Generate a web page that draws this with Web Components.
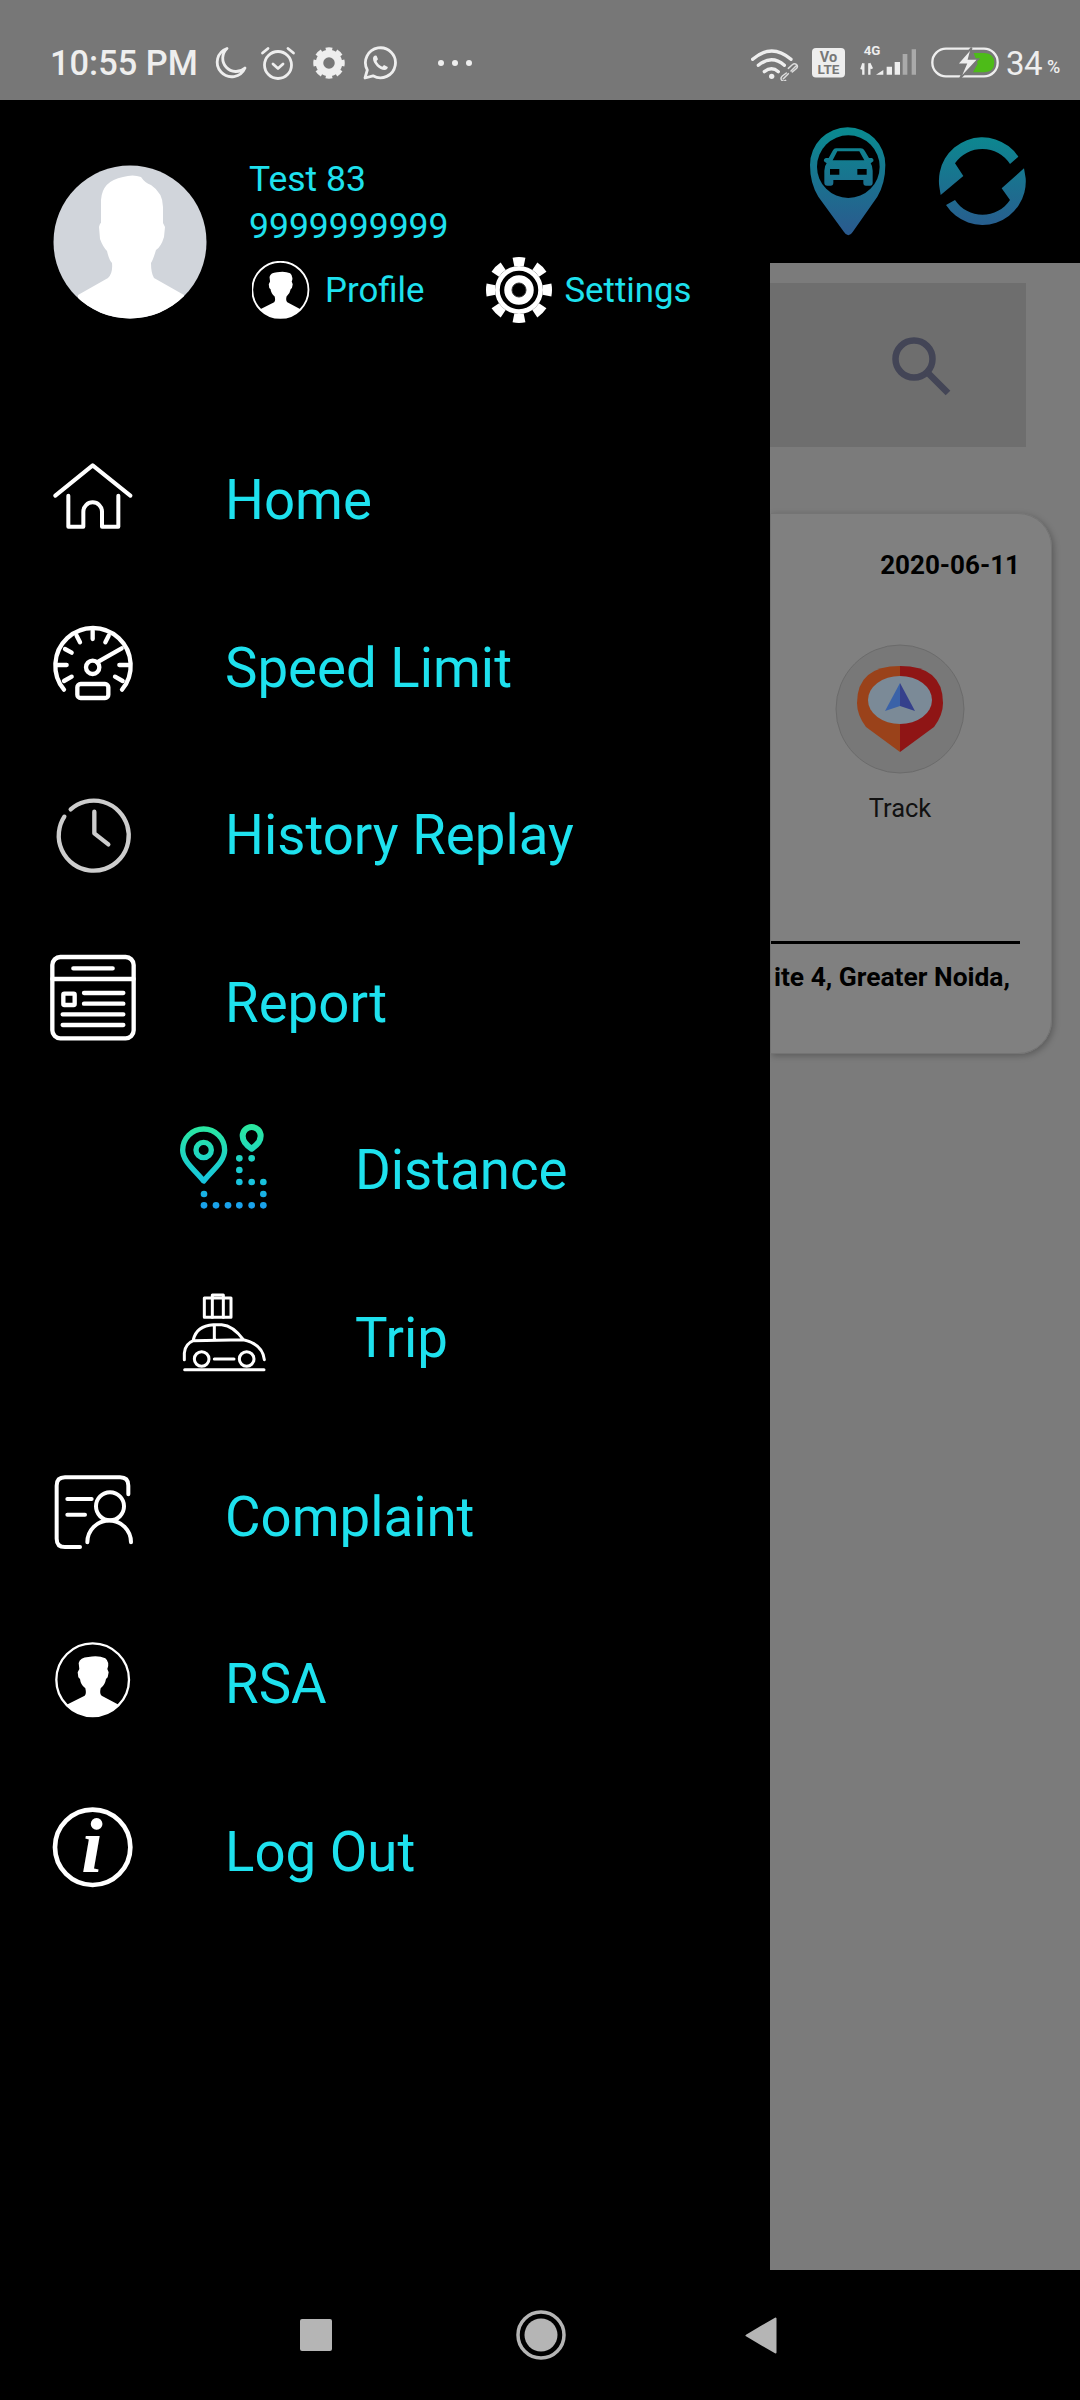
<!DOCTYPE html>
<html lang="en"><head><meta charset="utf-8"><title>Drawer</title>
<style>html,body{margin:0;padding:0;background:#000;font-family:Roboto,"Liberation Sans",sans-serif}</style>
</head><body>
<phone-screen>
  <status-bar></status-bar>
  <screen-body>
    <top-bar></top-bar>
    <search-box></search-box>
    <device-card date="2020-06-11" address="ite 4, Greater Noida,"></device-card>
    <nav-drawer>
      <profile-head name="Test 83" phone="9999999999"></profile-head>
      <drawer-item><svg slot="icon" width="120" height="120" viewBox="0 0 360 360" fill="none" stroke="#fff" stroke-width="12" stroke-linecap="round" stroke-linejoin="round"><path d="M76 167 188 76 301 167M115 167V260H160V215A28 28 0 0 1 216 215V260H265V167"/></svg>Home</drawer-item>
      <drawer-item><svg slot="icon" width="120" height="120" viewBox="0 504 360 360" fill="none" stroke="#fff" stroke-width="13" stroke-linecap="round" stroke-linejoin="round"><path d="M102 752A113 113 0 1 1 276 752"/><path d="M188 575V600M140 590 150 610M236 590 226 610M105 630 125 641M78 678H110M268 678H298M102 726 125 713M255 713 278 726M205 668 275 628"/><circle cx="188" cy="685" r="20"/><rect x="142" y="735" width="93" height="42" rx="10"/></svg>Speed Limit</drawer-item>
      <drawer-item><svg slot="icon" width="120" height="120" viewBox="0 15 360 360" fill="none" stroke="#cdcdcd" stroke-width="13" stroke-linecap="round" stroke-linejoin="round"><path d="M122 118A105 105 0 1 1 103 140"/><path d="M193 125V190L235 223"/></svg>History Replay</drawer-item>
      <drawer-item><svg slot="icon" width="120" height="120" viewBox="0 519 360 360" fill="none" stroke="#fff" stroke-width="13" stroke-linecap="round" stroke-linejoin="round"><rect x="67" y="564" width="244" height="244" rx="24"/><path d="M67 630H311M130 598H248M162 672H280M162 704H280M98 736H280M98 768H280"/><rect x="100" y="674" width="34" height="34" rx="3"/></svg>Report</drawer-item>
      <drawer-item sub><svg slot="icon" width="130" height="140" viewBox="0 0 390 420" fill="none"><defs><linearGradient id="dg" gradientUnits="userSpaceOnUse" x1="0" y1="70" x2="0" y2="330"><stop offset="0" stop-color="#2be99c"/><stop offset=".65" stop-color="#17c6dc"/><stop offset="1" stop-color="#1a9bee"/></linearGradient></defs><g stroke="url(#dg)"><path stroke-width="16" stroke-linejoin="round" d="M131 243C105 210 68 185 68 150A63 63 0 0 1 194 150C194 185 157 210 131 243Z"/><circle cx="131" cy="150" r="23" stroke-width="16"/><path stroke-width="18" stroke-linejoin="round" d="M275 146C258 135 248 125 248 108A27 27 0 0 1 302 108C302 125 292 135 275 146Z"/></g><g fill="url(#dg)"><circle cx="238" cy="175" r="10"/><circle cx="275" cy="175" r="10"/><circle cx="238" cy="210" r="10"/><circle cx="238" cy="246" r="10"/><circle cx="275" cy="246" r="10"/><circle cx="310" cy="246" r="10"/><circle cx="132" cy="282" r="10"/><circle cx="310" cy="282" r="10"/><circle cx="132" cy="316" r="10"/><circle cx="168" cy="316" r="10"/><circle cx="204" cy="316" r="10"/><circle cx="238" cy="316" r="10"/><circle cx="275" cy="316" r="10"/><circle cx="310" cy="316" r="10"/></g></svg>Distance</drawer-item>
      <drawer-item sub><svg slot="icon" width="130" height="140" viewBox="0 504 390 420" fill="none" stroke="#fff" stroke-width="9" stroke-linecap="round" stroke-linejoin="round"><rect x="133" y="597" width="80" height="58"/><path d="M157 597V588H190V597M157 597V655M190 597V655M100 722Q110 680 160 677H185Q220 680 250 722M163 677V722M73 782V762Q75 735 100 725L250 722Q308 735 313 782M163 780H222M74 812H312"/><circle cx="125" cy="780" r="22"/><circle cx="260" cy="780" r="22"/></svg>Trip</drawer-item>
      <drawer-item gap><svg slot="icon" width="120" height="120" viewBox="0 -9 360 360" fill="none" stroke="#fff" stroke-width="12" stroke-linecap="round" stroke-linejoin="round"><path d="M150 264H105Q80 264 80 239V80Q80 55 105 55H270Q295 55 295 80V106M112 120H185M112 167H165M172 250A65 65 0 0 1 303 250"/><circle cx="240" cy="142" r="42"/></svg>Complaint</drawer-item>
      <drawer-item><svg slot="icon" width="120" height="120" viewBox="0 495 360 360"><circle cx="188" cy="662" r="109" fill="#000" stroke="#fff" stroke-width="7"/><path fill="#fff" d="M110 737 164 710Q170 705 166 688Q152 678 150 660L145 655 143 640 148 630 146 612Q150 595 175 594Q205 588 226 598 240 610 232 630L236 640 233 655 228 660Q225 678 212 688 208 705 215 710L266 737A108 108 0 0 1 110 737Z"/></svg>RSA</drawer-item>
      <drawer-item><svg slot="icon" width="120" height="120" viewBox="0 996 360 360"><circle cx="188" cy="1165" r="113" fill="none" stroke="#fff" stroke-width="14"/><text x="186" y="1240" text-anchor="middle" font-family="Liberation Serif" font-style="italic" font-weight="700" font-size="232" fill="#fff">i</text></svg>Log Out</drawer-item>
    </nav-drawer>
  </screen-body>
  <nav-buttons></nav-buttons>
</phone-screen>
<script>
function def(name, html, init){
  const t=document.createElement('template'); t.innerHTML=html;
  customElements.define(name, class extends HTMLElement{
    constructor(){super(); this.attachShadow({mode:'open'}).appendChild(t.content.cloneNode(true));}
    connectedCallback(){ if(init) init(this, this.shadowRoot); }
  });
}
const CY='#1ee1ee';
def('phone-screen',`<style>:host{display:flex;flex-direction:column;width:1080px;height:2400px;overflow:hidden;background:#7b7b7b}</style><slot></slot>`);
def('screen-body',`<style>:host{display:block;flex:1;position:relative;min-height:0;background:#7b7b7b}</style><slot></slot>`);

def('status-bar',`<style>
:host{display:flex;flex:none;height:100px;box-sizing:border-box;padding-top:26px;background:#777;color:#eee;align-items:center;font-family:Roboto,sans-serif}
.t{font-size:34.400px;font-weight:500;margin-left:50px;width:150px;white-space:nowrap;letter-spacing:0}
svg{display:block;flex:none}
.p{font-size:33px;font-weight:400;margin-left:7px;letter-spacing:-.5px;width:35px}
.c{font-size:18px;font-weight:500;margin:6px 0 0 6px}
</style>
<span class="t">10:55 PM</span>
<svg style="margin-left:14px" width="34" height="34" viewBox="0 0 34 34" fill="none" stroke="#eee" stroke-width="2.800" stroke-linejoin="round"><path d="M13 2.500A14.500 14.500 0 1 0 31 22 13 13 0 0 1 13 2.500Z"/></svg>
<svg style="margin-left:12px" width="36" height="36" viewBox="0 0 36 36" fill="none" stroke="#eee" stroke-width="2.800" stroke-linecap="round" stroke-linejoin="round"><circle cx="18" cy="20" r="13.500"/><path d="M13 19 18 23.500 23 19M2.500 8 8 3.500M28 3.500 33.500 8"/></svg>
<svg style="margin-left:17px" width="32" height="32" viewBox="0 0 32 32"><circle cx="16" cy="16" r="9.500" fill="none" stroke="#eee" stroke-width="7.500"/><circle cx="16" cy="16" r="13.500" fill="none" stroke="#eee" stroke-width="4.500" pathLength="8" stroke-dasharray=".6 .4" stroke-dashoffset=".3"/></svg>
<svg style="margin-left:18px" width="34" height="34" viewBox="0 0 34 34" fill="none" stroke="#eee" stroke-width="2.800" stroke-linejoin="round"><path d="M2 32 4.300 24A15 15 0 1 1 10 29.800Z"/><path fill="#eee" stroke="none" d="M12.500 9.500C11 9.500 10 11 10 12.500 10 17.500 16.500 24 21.500 24 23.500 24 25 22.500 24.800 21L21 19 19.300 20.800C17 20 14.300 17.200 13.500 15L15 13.300 13.600 9.800Z"/></svg>
<svg style="margin-left:39px" width="38" height="10" viewBox="0 0 38 10" fill="#eee"><circle cx="5" cy="5" r="3"/><circle cx="19" cy="5" r="3"/><circle cx="33" cy="5" r="3"/></svg>
<svg style="margin-left:277px" width="50" height="36" viewBox="0 0 150 108" fill="none" stroke="#eee" stroke-width="10" stroke-linecap="round"><path d="M5 43Q62 -7 120 43M22 61Q62 28 100 61M40 80Q62 63 82 80"/><circle cx="62" cy="94" r="8" fill="#eee" stroke="none"/><g stroke="#ddd" stroke-width="4.500"><path d="M97 101 112 86M120 78 135 63M104 106Q96 112 91 104 88 98 94 93L106 84M124 81 137 70Q142 63 136 58 130 54 123 60L112 70"/></g></svg>
<svg style="margin-left:11px" width="33" height="30" viewBox="0 0 33 30"><rect width="33" height="29.500" rx="4" fill="#eee"/><text x="16.500" y="13.500" text-anchor="middle" font-family="Roboto" font-weight="700" font-size="14.500" fill="#777">Vo</text><text x="16.500" y="26" text-anchor="middle" font-family="Roboto" font-weight="700" font-size="13.500" fill="#777">LTE</text></svg>
<svg style="margin-left:15px" width="56" height="42" viewBox="0 -12 168 126"><text x="11" y="28" font-family="Roboto" font-weight="700" font-size="40" fill="#eee">4G</text><path stroke="#eee" stroke-width="7" fill="none" d="M10 52V86M4 70 10 52"/><path stroke="#eee" stroke-width="7" fill="none" d="M28 86V52M28 52 36 68"/><g fill="#eee"><path d="M48 86 70 72V86ZM80 62H96V86H80ZM104 48H120V86H104Z"/></g><path d="M128 24H142V86H128ZM155 10H168V86H155Z" fill="#aaa"/></svg>
<svg style="margin-left:15px" width="68" height="32" viewBox="0 0 204 96"><rect x="4" y="5" width="196" height="83" rx="41" fill="none" stroke="#eee" stroke-width="7"/><path fill="#4dbb18" d="M128 18H160Q190 20 190 47 190 74 160 76H126L140 50Z"/><path fill="#eee" stroke="#777" stroke-width="5" stroke-linejoin="miter" d="M122 2 78 52H105L86 96 142 36H113Z"/></svg>
<span class="p">34</span><span class="c">%</span>`);

def('top-bar',`<style>:host{display:flex;height:163px;background:#000;position:relative}
svg{position:absolute;left:0;top:0}</style>
<svg width="380" height="163" style="left:700px" viewBox="0 300 1140 489"><defs><linearGradient id="g" gradientUnits="userSpaceOnUse" x1="0" y1="390" x2="0" y2="700"><stop offset="0" stop-color="#0a8a90"/><stop offset="1" stop-color="#2a5a8e"/></linearGradient></defs>
<path fill="url(#g)" d="M445 706Q438 706 432 696L355 590Q330 550 330 495A113 113 0 0 1 556 495Q556 550 532 590L458 696Q452 706 445 706Z"/><circle cx="445" cy="500" r="94" fill="#000"/>
<path fill="url(#g)" d="M408 445H482Q490 445 494 452L507 474H515Q522 476 520 484L512 490Q518 498 518 512V548Q518 557 510 557H498Q490 557 490 548V540H400V548Q400 557 392 557H382Q373 557 373 548V512Q373 498 380 490L372 484Q370 476 378 474H386L398 452Q402 445 408 445Z"/>
<path fill="#000" d="M398 481 412 454H478L493 481ZM390 507H418V524H390ZM472 507H500V524H472Z"/>
<path fill="url(#g)" d="M955 470A130 130 0 0 0 718 560L722 585 790 528 765 490A99 99 0 0 1 930 492Z"/>
<path fill="url(#g)" d="M738 615A130 130 0 0 0 977 535L972 505 905 565 930 600A99 99 0 0 1 765 600Z"/></svg>`);

def('search-box',`<style>:host{display:flex;align-items:center;justify-content:flex-end;box-sizing:border-box;height:164px;margin:20px 54px 66px 770px;background:#6e6e6e;padding:8px 68px 0 0}svg{display:block}</style>
<svg width="68" height="68" viewBox="0 0 68 68" fill="none" stroke="#434556" stroke-width="6.500"><circle cx="24" cy="24" r="18.500"/><path d="M37 37 58 58"/></svg>`);

def('device-card',`<style>:host{display:flex;flex-direction:column;box-sizing:border-box;width:282px;height:541px;margin-left:770px;background:#808080;border-radius:0 34px 34px 0;box-shadow:2px 2px 6px rgba(0,0,0,.25);outline:1px solid #747474;outline-offset:-1px;color:#000;font-family:Roboto,sans-serif}
.d{font-weight:700;font-size:26px;line-height:30px;margin:37px 32px 0 0;text-align:right}
.tr{display:flex;flex-direction:column;align-items:center;width:260px;margin-top:64px}
svg{display:block}
.l{font-size:25.500px;line-height:30px;margin-top:19px;color:#111}
.r{height:3px;background:#000;margin:118px 32px 0 0}
.a{font-weight:700;font-size:26.400px;line-height:30px;margin:18px 42px 0 0;text-align:right;white-space:nowrap}
</style>
<div class="d"></div>
<div class="tr"><svg width="130" height="130" viewBox="835 645 130 130"><circle cx="900" cy="710" r="64" fill="#787878" stroke="#6b6b6b"/><path fill="#9a421a" d="M900 753 866 728Q857 716 857 704 857 667 900 667Z"/><path fill="#8f1515" d="M900 753 934 728Q943 716 943 704 943 667 900 667Z"/><ellipse cx="900" cy="701" rx="32" ry="24" fill="#7b8a97"/><path fill="#3a62a8" d="M900 684 885 712 900 707Z"/><path fill="#35408c" d="M900 684 915 712 900 707Z"/></svg><div class="l">Track</div></div>
<div class="r"></div>
<div class="a"></div>`,(h,s)=>{s.querySelector('.d').textContent=h.getAttribute('date');s.querySelector('.a').textContent=h.getAttribute('address');});

def('nav-drawer',`<style>:host{display:flex;flex-direction:column;position:absolute;left:0;top:0;bottom:0;width:770px;background:#000;color:${CY};font-family:Roboto,sans-serif}</style><slot></slot>`);

const man=`M110 737 164 710Q170 705 166 688Q152 678 150 660L145 655 143 640 148 630 146 612Q150 595 175 594Q205 588 226 598 240 610 232 630L236 640 233 655 228 660Q225 678 212 688 208 705 215 710L266 737A108 108 0 0 1 110 737Z`;
def('profile-head',`<style>:host{display:flex;height:316px;box-sizing:border-box;padding:65px 0 0 53px;gap:42px}
svg{display:block;flex:none}
.i{display:flex;flex-direction:column;font-size:35.500px;line-height:47px;color:${CY};margin-top:-9px}
.a{display:flex;align-items:center;margin-top:7px;font-size:34.800px;line-height:60px}
.a span{margin-left:15px}
</style>
<svg width="154" height="154" viewBox="0 0 154 154"><defs><clipPath id="c"><circle cx="77" cy="77" r="76.500"/></clipPath></defs><circle cx="77" cy="77" r="76.500" fill="#d1d5db"/><path clip-path="url(#c)" fill="#fff" d="M25 130 55 113Q60 108 59 98 56 95 54 86 50 82 47 74L46 62Q47 58 48 58V35Q49 16 70 12 80 9 88 12 92 18 98 20 110 28 110 42V58L112 62 111 72Q108 82 103 85 100 95 98 98 98 108 101 113L131 130V160H25Z"/></svg>
<div class="i"><div class="n"></div><div class="p"></div>
<div class="a"><svg style="margin-left:3px" width="58" height="58" viewBox="78 550 225 225"><circle cx="188" cy="662" r="109" fill="#000" stroke="#fff" stroke-width="7"/><path fill="#fff" d="${man}"/></svg><span>Profile</span>
<svg style="margin-left:62px" width="66" height="66" viewBox="0 0 66 66"><circle cx="33" cy="33" r="28.500" fill="none" stroke="#fff" stroke-width="9" pathLength="8" stroke-dasharray=".5 .5" stroke-dashoffset=".25"/><circle cx="33" cy="33" r="24" fill="#fff"/><circle cx="33" cy="33" r="17" fill="none" stroke="#000" stroke-width="4.500"/><circle cx="33" cy="33" r="7" fill="#000" stroke="#333" stroke-width="1"/></svg><span style="margin-left:12px">Settings</span></div></div>`,
(h,s)=>{s.querySelector('.n').textContent=h.getAttribute('name');s.querySelector('.p').textContent=h.getAttribute('phone');});

def('drawer-item',`<style>:host{display:flex;align-items:center;height:167.500px;box-sizing:border-box;padding-left:30px;font-size:54.600px;color:${CY};white-space:nowrap}
:host([sub]){padding-left:160px}
:host([gap]){margin-top:11.500px}
.ic{display:flex;width:120px;margin-right:75px;flex:none}
:host([sub]) .ic{width:130px;margin-right:65px}
.tx{padding-top:1px}
</style><div class="ic"><slot name="icon"></slot></div><div class="tx"><slot></slot></div>`);

def('nav-buttons',`<style>:host{display:flex;flex:none;align-items:center;height:130px;background:#000;padding-left:300px;box-sizing:border-box}
svg{display:block;flex:none}</style>
<svg width="32" height="32" viewBox="0 0 32 32"><rect width="32" height="32" rx="2" fill="#b5b5b5"/></svg>
<svg style="margin-left:184px" width="50" height="50" viewBox="0 0 50 50"><circle cx="25" cy="25" r="23" fill="none" stroke="#b5b5b5" stroke-width="3.500"/><circle cx="25" cy="25" r="16.500" fill="#b5b5b5"/></svg>
<svg style="margin-left:179px" width="32" height="37" viewBox="0 0 32 37"><path fill="#b5b5b5" stroke="#b5b5b5" stroke-width="2" stroke-linejoin="round" d="M1.500 18.500 30.500 1.500V35.500Z"/></svg>`);
</script>
</body></html>
